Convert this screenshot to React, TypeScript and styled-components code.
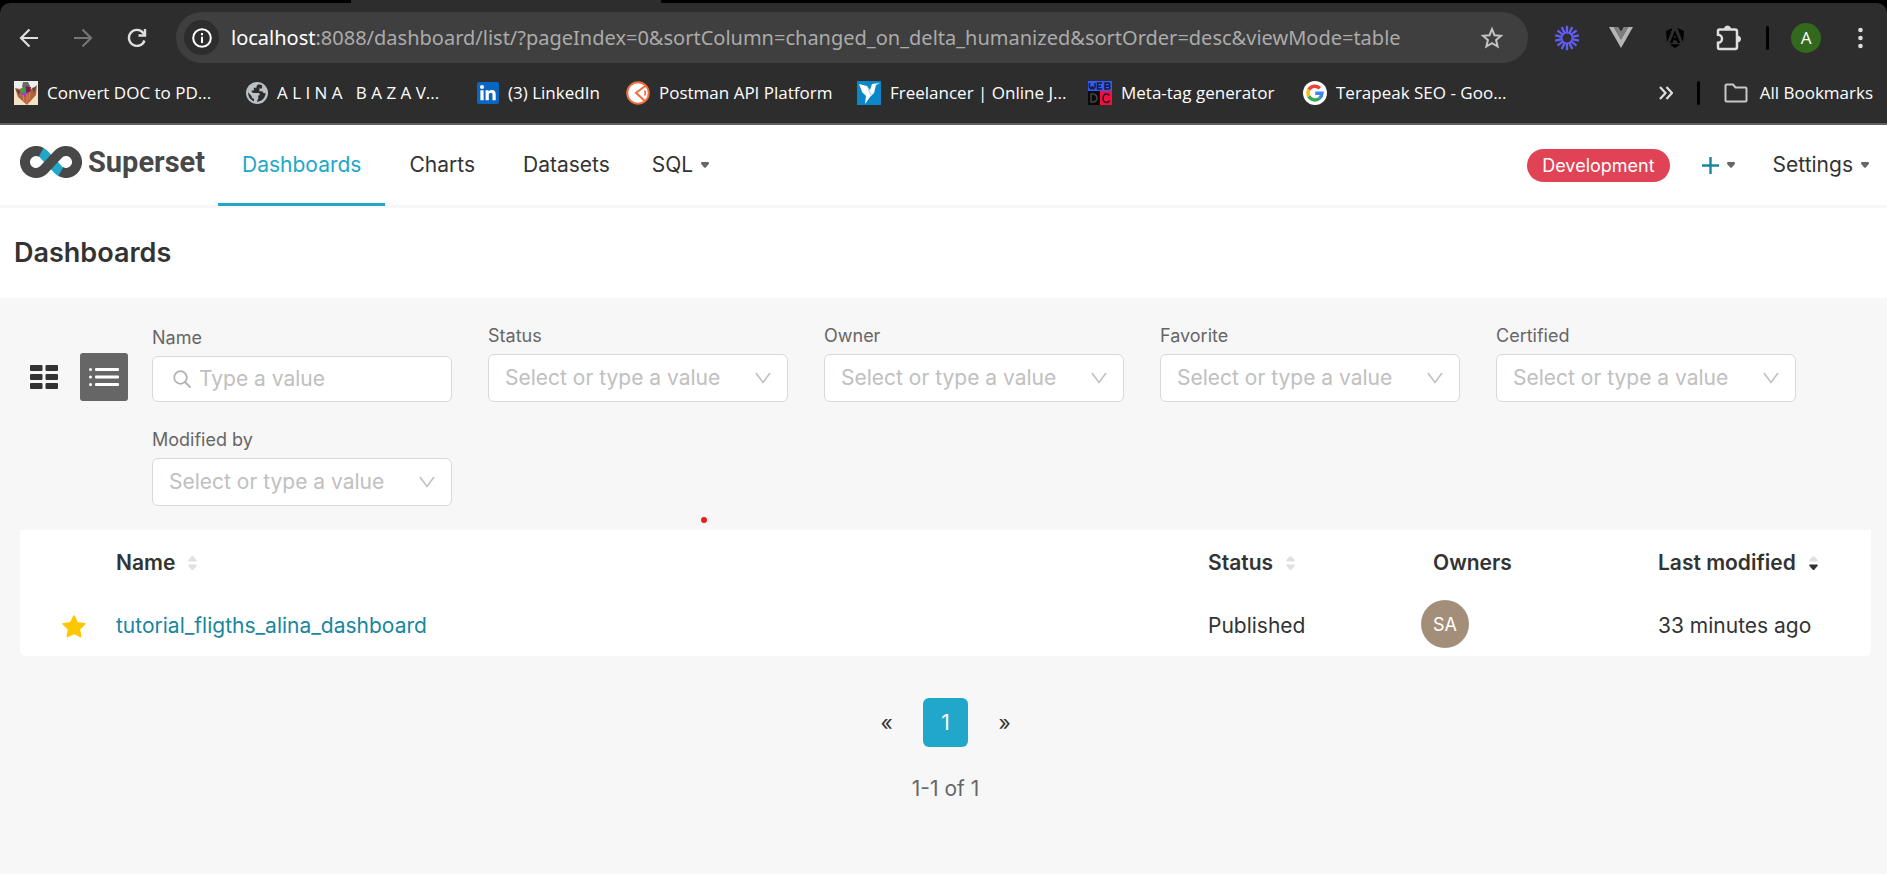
import React from 'react';
import styled, { createGlobalStyle } from 'styled-components';

const color = {
  primary: '#20a7c9',
  link: '#1985a0',
  text: '#333333',
  muted: '#666666',
  placeholder: '#c0c0c0',
  line: '#d9d9d9',
  canvas: '#f7f7f7',
  chrome: '#2d2d2d',
  chromeIcon: '#dedede',
};

const GlobalStyle = createGlobalStyle`
  *, *::before, *::after { box-sizing: border-box; }
  body {
    margin: 0;
    background: #ffffff;
    color: ${color.text};
    font-family: Inter, "Liberation Sans", sans-serif;
    font-size: 21px;
    line-height: 30px;
  }
  button, input, select { font: inherit; color: inherit; }
  button { padding: 0; border: 0; background: none; cursor: pointer; }
  a { color: inherit; text-decoration: none; }
  svg { display: block; flex: none; }
`;

const Window = styled.div`
  display: flex;
  flex-direction: column;
  min-height: 100vh;
`;

/* ---------- browser chrome ---------- */

const Chrome = styled.header`
  background: #000000;
  border-bottom: 2px solid #5f5f5f;
  font-family: "Open Sans", "Noto Sans", sans-serif;
`;

const TabStrip = styled.div`
  display: flex;
  height: 3px;
  padding-left: 351px;
`;

const ActiveTab = styled.div`
  width: 310px;
  background: ${color.chrome};
`;

const ChromePanel = styled.div`
  background: ${color.chrome};
  border-radius: 10px 10px 0 0;
  padding-bottom: 9px;
`;

const Toolbar = styled.div`
  display: flex;
  align-items: center;
  height: 69px;
  padding-left: 2px;
`;

const ToolButton = styled.button`
  display: flex;
  flex: none;
  align-items: center;
  justify-content: center;
  width: 54px;
  height: 48px;
`;

const AddressBar = styled.div`
  display: flex;
  flex: 1;
  align-items: center;
  min-width: 0;
  height: 51px;
  margin: 0 12px;
  padding: 0 24px 0 8px;
  border-radius: 26px;
  background: #3f3f3f;
`;

const SiteInfo = styled.button`
  display: flex;
  flex: none;
  align-items: center;
  justify-content: center;
  width: 35px;
  height: 35px;
  border-radius: 50%;
  background: ${color.chrome};
`;

const Address = styled.div`
  flex: 1;
  min-width: 0;
  margin: 0 12px;
  overflow: hidden;
  color: #ababab;
  font-family: "Noto Sans", sans-serif;
  font-size: 20px;
  white-space: nowrap;
`;

const Host = styled.span`
  color: #ffffff;
`;

const Divider = styled.span`
  flex: none;
  width: 3px;
  height: 24px;
  margin: 0 10px;
  border-radius: 2px;
  background: #000000;
`;

const ProfileBadge = styled.span`
  width: 30px;
  height: 30px;
  border-radius: 50%;
  background: #33691e;
  color: #ffffff;
  font-size: 17px;
  line-height: 30px;
  text-align: center;
`;

const BookmarksBar = styled.nav`
  display: flex;
  align-items: center;
  height: 42px;
  padding: 0 14px;
  color: #ffffff;
  font-size: 17px;
`;

const Bookmark = styled.a<{ $slot?: number }>`
  display: flex;
  flex: none;
  align-items: center;
  gap: 9px;
  width: ${(p) => (p.$slot ? `${p.$slot}px` : 'auto')};
  white-space: pre;
`;

const BookmarksEnd = styled.div`
  display: flex;
  align-items: center;
  gap: 14px;
  margin-left: auto;
`;

const AllBookmarks = styled.button`
  display: flex;
  align-items: center;
  gap: 12px;
`;

/* ---------- application navigation ---------- */

const NavBar = styled.nav`
  display: flex;
  align-items: center;
  height: 83px;
  padding: 0 18px 0 20px;
  border-bottom: 3px solid ${color.canvas};
`;

const Brand = styled.a`
  display: flex;
  align-items: center;
  gap: 6px;
  margin-right: 13px;
  padding-bottom: 6px;
  color: #484848;
  font-family: Roboto, sans-serif;
  font-size: 29px;
  font-weight: 700;
`;

const NavTab = styled.a<{ $active?: boolean }>`
  display: flex;
  align-items: center;
  height: 82px;
  padding: 0 24px;
  border: solid transparent;
  border-width: 3px 0;
  border-bottom-color: ${(p) => (p.$active ? color.primary : 'transparent')};
  color: ${(p) => (p.$active ? color.primary : color.text)};
`;

const NavMenu = styled.button`
  display: flex;
  align-items: center;
  gap: 8px;
  margin-left: 18px;
`;

const NavEnd = styled.div`
  display: flex;
  align-items: center;
  gap: 20px;
  margin-left: auto;
`;

const EnvTag = styled.span`
  height: 33px;
  margin-right: -6px;
  padding: 0 15px;
  border-radius: 17px;
  background: #e04355;
  color: #ffffff;
  font-size: 18px;
  line-height: 33px;
`;

const TitleBar = styled.div`
  display: flex;
  align-items: center;
  height: 90px;
  padding: 0 14px;
`;

const PageTitle = styled.h1`
  margin: 0;
  font-size: 27px;
  font-weight: 600;
`;

/* ---------- list view ---------- */

const ListView = styled.main`
  position: relative;
  flex: 1;
  padding: 26px 16px 26px 20px;
  background: ${color.canvas};
`;

const Controls = styled.div`
  display: flex;
  gap: 24px;
  margin-bottom: 24px;
`;

const ViewToggle = styled.div`
  display: flex;
  gap: 12px;
  margin-top: 29px;
`;

const ViewButton = styled.button<{ $selected?: boolean }>`
  display: flex;
  align-items: center;
  justify-content: center;
  width: 48px;
  height: 48px;
  border-radius: 3px;
  background: ${(p) => (p.$selected ? color.muted : 'transparent')};
`;

const Filters = styled.div`
  display: flex;
  flex: 1;
  flex-wrap: wrap;
  align-items: flex-end;
  gap: 26px 36px;
`;

const Filter = styled.div`
  display: flex;
  flex-direction: column;
  gap: 6px;
  width: 300px;
`;

const FilterLabel = styled.label`
  color: ${color.muted};
  font-size: 18px;
  line-height: 24px;
`;

const SearchBox = styled.div`
  display: flex;
  align-items: center;
  gap: 8px;
  height: 46px;
  padding: 0 16px 0 20px;
  border: 1px solid ${color.line};
  border-radius: 6px;
  background: #ffffff;
`;

const SearchInput = styled.input`
  flex: 1;
  min-width: 0;
  padding: 0;
  border: 0;
  outline: 0;
  background: none;
  &::placeholder { color: ${color.placeholder}; opacity: 1; }
`;

const SelectBox = styled.div`
  display: grid;
  align-items: center;
  > * { grid-area: 1 / 1; }
  > svg { justify-self: end; margin-right: 17px; pointer-events: none; }
`;

const Select = styled.select`
  width: 100%;
  height: 48px;
  padding: 0 48px 0 16px;
  border: 1px solid ${color.line};
  border-radius: 6px;
  appearance: none;
  background: #ffffff;
  color: ${color.placeholder};
`;

const Pointer = styled.span`
  position: absolute;
  top: 219px;
  left: 701px;
  width: 6px;
  height: 6px;
  border-radius: 50%;
  background: #ee1c1c;
`;

const Table = styled.table`
  width: 100%;
  border-collapse: separate;
  border-spacing: 0;
  border-radius: 0 0 6px 6px;
  table-layout: fixed;
  background: #ffffff;
`;

const HeadCell = styled.th<{ $width?: number }>`
  width: ${(p) => (p.$width ? `${p.$width}px` : 'auto')};
  height: 66px;
  padding: 0 18px;
  font-weight: 600;
  text-align: left;
`;

const SortButton = styled.button`
  display: flex;
  align-items: center;
  gap: 13px;
  font-weight: 600;
`;

const Cell = styled.td<{ $pad?: number }>`
  height: 60px;
  padding: 0 0 0 ${(p) => p.$pad ?? 18}px;
`;

const FavoriteButton = styled.button`
  display: block;
`;

const DashboardLink = styled.a`
  color: ${color.link};
`;

const Avatar = styled.span`
  display: block;
  width: 48px;
  height: 48px;
  margin-bottom: 4px;
  border-radius: 50%;
  background: #a38f79;
  color: #ffffff;
  font-size: 18px;
  line-height: 49px;
  text-align: center;
`;

const Pager = styled.nav`
  display: flex;
  justify-content: center;
  gap: 14px;
  margin-top: 42px;
`;

const PageButton = styled.button<{ $current?: boolean }>`
  width: 45px;
  height: 49px;
  border-radius: 6px;
  background: ${(p) => (p.$current ? color.primary : 'transparent')};
  color: ${(p) => (p.$current ? '#ffffff' : color.text)};
`;

const RowCount = styled.p`
  margin: 27px 0 0;
  color: ${color.muted};
  text-align: center;
`;

/* ---------- icons ---------- */

const BackIcon = () => (
  <svg width="20" height="20" viewBox="0 0 20 20" fill="none" stroke={color.chromeIcon} strokeWidth="2.2">
    <path d="M19 10H3M10.5 1.500L2 10l8.500 8.500" />
  </svg>
);

const ForwardIcon = () => (
  <svg width="20" height="20" viewBox="0 0 20 20" fill="none" stroke="#757575" strokeWidth="2.200">
    <path d="M1 10h16M9.500 1.500L18 10l-8.500 8.500" />
  </svg>
);

const ReloadIcon = () => (
  <svg width="20" height="20" viewBox="0 0 20 20" fill="none" stroke={color.chromeIcon} strokeWidth="2.400">
    <path d="M17.500 12.500A8 8 0 1 1 16.300 5L18 7" />
    <path d="M18 1v6.500h-6.500" />
  </svg>
);

const InfoIcon = () => (
  <svg width="20" height="20" viewBox="0 0 20 20">
    <circle cx="10" cy="10" r="8.800" fill="none" stroke="#ffffff" strokeWidth="2" />
    <path d="M9 8.800h2V15H9zM9 5h2v2.200H9z" fill="#ffffff" />
  </svg>
);

const BookmarkStarIcon = () => (
  <svg width="24" height="24" viewBox="0 0 24 24" fill="none" stroke="#c4c4c4" strokeWidth="2">
    <path d="M12 3.200l2.500 6 6.500.6-4.900 4.300 1.500 6.400L12 17.100l-5.600 3.400 1.500-6.400L3 9.800l6.500-.6z" />
  </svg>
);

const BurstIcon = () => (
  <svg width="26" height="26" viewBox="0 0 26 26" stroke="#625df5" strokeWidth="2.300">
    {Array.from({ length: 14 }, (_, i) => (
      <path key={i} d="M13 8V0.800" transform={`rotate(${(i * 360) / 14} 13 13)`} />
    ))}
    <circle cx="13" cy="13" r="5.300" fill="none" strokeWidth="1.500" />
  </svg>
);

const VueIcon = () => (
  <svg width="24" height="21" viewBox="0 0 24 21">
    <path d="M0 0h4.800L12 12.500 19.200 0H24L12 21z" fill="#b5b5b5" />
    <path d="M4.800 0h4.500L12 4.600 14.700 0h4.500L12 12.500z" fill="#7f7f7f" />
  </svg>
);

const AngularIcon = () => (
  <svg width="18" height="20" viewBox="0 0 18 20" fill="#000000">
    <path d="M6.500 0L0 3l1 11.500zM11.500 0L18 3l-1 11.500zM9 2.500L3.800 15h2.600l1-2.700h3.200l1 2.700h2.600zm0 4.200l1.200 3.300H7.800zM4.500 16.200h9V17L9 20l-4.500-3z" />
  </svg>
);

const PuzzleIcon = () => (
  <svg width="26" height="26" viewBox="0 0 26 26">
    <path
      d="M3.500 4.500h15.500q2 0 2 2V22q0 2-2 2H3.500q-1.500 0-1.500-1.500v-4.700a4 4 0 0 0 0-8V6q0-1.500 1.500-1.500z"
      fill="none"
      stroke={color.chromeIcon}
      strokeWidth="2.500"
    />
    <path d="M8.500 4a3 3 0 0 1 6 0zM21.500 11a3 3 0 0 1 0 6z" fill={color.chromeIcon} stroke={color.chromeIcon} />
  </svg>
);

const MoreIcon = () => (
  <svg width="5" height="22" viewBox="0 0 5 22" fill={color.chromeIcon}>
    <circle cx="2.500" cy="3" r="2.300" />
    <circle cx="2.500" cy="11" r="2.300" />
    <circle cx="2.500" cy="19" r="2.300" />
  </svg>
);

const ConverterIcon = () => (
  <svg width="24" height="24" viewBox="0 0 24 24">
    <path d="M0 0h24v24H0z" fill="#f3e3c4" />
    <path d="M0 0h24v8H0z" fill="#eeeeee" />
    <path d="M1 7l5 1 6-3 6 3 5-4-1 10-9 10L4 16z" fill="#b5603f" />
    <path d="M9 1h5l2 4-4 4-4-3z" fill="#6a6a6a" />
    <path d="M6 8l5-2 1 6-4 1z" fill="#3aa63a" />
    <path d="M12 5l5 1-1 5-4 1z" fill="#7c1f4f" />
    <path d="M7 12l6-1-1 6z" fill="#8a45e0" />
    <path d="M18 7l4-1-2 6zM2 8l4 2-1 4z" fill="#4a4a4a" />
    <path d="M9 14l1 7M13 13v9M16 11l-1 8" stroke="#d9874f" />
  </svg>
);

const GlobeIcon = () => (
  <svg width="22" height="22" viewBox="1 1 22 22">
    <circle cx="12" cy="12" r="11" fill="#bcc0c5" />
    <path
      d="M14 3.200c-2 .5-2.800 1.800-2.500 3.600H8.800v2.700H6.500c-.2 1.500.8 2.400 2.300 2.400h4.700c1.600 0 1.700 2.600-.2 2.700v2.700c0 1.300-1.300 1.500-1.300 3.400 4.500-.2 8.600-4 8.600-8.800-1.600.8-3-.2-3.200-1.600h-3V7.500h2.700V4.200zM3.200 11.200c-.4 4.500 2.300 8 5.800 9.200v-2.700c-1.500 0-2.400-1-2.400-2.500z"
      fill={color.chrome}
    />
  </svg>
);

const LinkedInIcon = () => (
  <svg width="22" height="22" viewBox="0 0 22 22">
    <rect width="22" height="22" rx="2" fill="#0a66c2" />
    <circle cx="5" cy="5" r="2" fill="#ffffff" />
    <path
      d="M3.400 8.300h3.200v10H3.400zM8.600 8.300h3v1.400c.6-1 1.700-1.700 3.200-1.700 3 0 3.900 1.900 3.900 4.700v5.600h-3.200v-5c0-1.400-.3-2.500-1.700-2.500-1.500 0-2 1.100-2 2.500v5H8.600z"
      fill="#ffffff"
    />
  </svg>
);

const PostmanIcon = () => (
  <svg width="24" height="24" viewBox="0 0 24 24" fill="none" stroke="#f26b3a">
    <circle cx="12" cy="12" r="10.800" fill="#ffffff" strokeWidth="2" />
    <path d="M20 4.500l-10 7.300 8.500 8" strokeWidth="2" />
    <path d="M18.500 9.500q2 2.500 0 5" strokeWidth="1.500" />
  </svg>
);

const FreelancerIcon = () => (
  <svg width="24" height="24" viewBox="0 0 24 24">
    <path d="M0 0h24v24H0z" fill="#0a87c9" />
    <path d="M2 3l8 2 3 4 2-6 8-1-4 2-2 8-4 4-5 7 1-8-4-4-1-3z" fill="#ffffff" />
    <path d="M10 5l4 9" stroke="#9bd1ec" />
  </svg>
);

const WebDcIcon = () => (
  <svg width="24" height="24" viewBox="0 0 24 24">
    <path d="M0 0h24v10H0z" fill="#2f5df5" />
    <path d="M0 10h12v14H0z" fill="#0a0a0a" />
    <path d="M12 10h12v14H12z" fill="#fa0f3c" />
    <g fill="none" stroke="#1a1a2e" strokeWidth="1.500">
      <path d="M1.500 2v4l1.500 2 1.300-2 1.300 2L7 6V2M14 2H9.500v6H14M9.500 5H13M17 2v6h4q2-1.500 0-3 1.500-1.500 0-3zM17 5h4" />
      <path d="M21.500 14.500q-1-2-4-1.500-2.500 1-2.500 4.500t3 4q3 0 3.500-2" />
      <path d="M3 13v8h3q3-1 3-4t-3-4z" stroke="#444444" />
    </g>
  </svg>
);

const GoogleIcon = () => (
  <svg width="24" height="24" viewBox="0 0 24 24" fill="none" strokeWidth="3.400">
    <circle cx="12" cy="12" r="12" fill="#ffffff" />
    <path d="M16.900 7.300A7 7 0 0 0 5.900 8.600" stroke="#ea4335" />
    <path d="M5.900 8.600a7 7 0 0 0 0 6.800" stroke="#fbbc05" />
    <path d="M5.900 15.400a7 7 0 0 0 10.600 1.900" stroke="#34a853" />
    <path d="M16.500 17.300A7 7 0 0 0 19 12.200h-6.800" stroke="#4285f4" />
  </svg>
);

const MoreBookmarksIcon = () => (
  <svg width="14" height="14" viewBox="0 0 14 14" fill="none" stroke={color.chromeIcon} strokeWidth="2.200">
    <path d="M1 1l5.500 6L1 13M7.500 1L13 7l-5.500 6" />
  </svg>
);

const FolderIcon = () => (
  <svg width="24" height="20" viewBox="0 0 24 20" fill="none" stroke="#c8c8c8" strokeWidth="2">
    <path d="M2.500 1.500H9l2.500 3h10q1 0 1 1v12q0 1-1 1h-19q-1 0-1-1v-15q0-1 1-1z" />
  </svg>
);

const SupersetMark = () => (
  <svg width="62" height="32" viewBox="0 0 62 32" fill="none" stroke="#484848" strokeWidth="10">
    <path d="M20.600 6A11 11 0 0 1 24 8.500L38 23.500A11 11 0 0 0 41.400 26" stroke={color.primary} />
    <path d="M21.200 6.300A11 11 0 1 0 24 23.500L38 8.500A11 11 0 1 1 40.800 25.700" />
  </svg>
);

const Caret = () => (
  <svg width="8" height="6" viewBox="0 0 8 6" fill={color.muted}>
    <path d="M1 0h6q1 0 1 1 0 1-.8 1.700L5 5.200q-1 1-2 0L.8 2.700Q0 2 0 1q0-1 1-1z" />
  </svg>
);

const PlusIcon = () => (
  <svg width="17" height="17" viewBox="0 0 17 17" stroke={color.link} strokeWidth="2.400">
    <path d="M8.500 0v17M0 8.500h17" />
  </svg>
);

const CardsIcon = () => (
  <svg width="28" height="24" viewBox="0 0 28 24" fill={color.text}>
    {[0, 9, 18].map((y) => (
      <g key={y}>
        <rect y={y} width="12.500" height="6" rx="1" />
        <rect x="15.500" y={y} width="12.500" height="6" rx="1" />
      </g>
    ))}
  </svg>
);

const ListIcon = () => (
  <svg width="30" height="18" viewBox="0 0 30 18" fill="#ffffff">
    {[1.5, 9, 16.5].map((y) => (
      <g key={y}>
        <circle cx="1.500" cy={y} r="1.500" />
        <rect x="6" y={y - 1.5} width="24" height="3" rx="1" />
      </g>
    ))}
  </svg>
);

const SearchIcon = () => (
  <svg width="18" height="18" viewBox="0 0 18 18" fill="none" stroke="#b2b2b2" strokeWidth="1.800">
    <circle cx="7.500" cy="7.500" r="6.300" />
    <path d="M12 12l5 5" strokeLinecap="round" />
  </svg>
);

const ChevronIcon = () => (
  <svg width="16" height="12" viewBox="0 0 16 12" fill="none" stroke="#bfbfbf" strokeWidth="1.600">
    <path d="M1 1l7 9.500L15 1" />
  </svg>
);

const SortIcon = ({ descending }: { descending?: boolean }) => (
  <svg width="9" height="14" viewBox="0 0 9 14" fill="#e0e0e0">
    <path d="M1 5.500Q0 5.500.3 4.200L3.500.6q1-1 2 0l3.200 3.600q.3 1.300-.7 1.300z" />
    <path
      d="M1 8.500q-1 0-.7 1.300l3.200 3.600q1 1 2 0l3.200-3.600Q9 8.500 8 8.500z"
      fill={descending ? color.text : '#e0e0e0'}
    />
  </svg>
);

const FavoriteIcon = () => (
  <svg width="24" height="23" viewBox="0 0 24 23">
    <path
      d="M12 1.200l3.200 6.600 7.500 1-5.400 5.200 1.200 7.500L12 18.200 5.500 21.500 6.700 14 1.300 8.800l7.500-1z"
      fill="#fcc700"
      stroke="#fcc700"
      strokeWidth="1.800"
      strokeLinejoin="round"
    />
  </svg>
);

/* ---------- content ---------- */

const bookmarks = [
  { label: 'Convert DOC to PD...', slot: 232, icon: <ConverterIcon /> },
  { label: 'A L I N A   B A Z A V...', slot: 231, icon: <GlobeIcon /> },
  { label: '(3) LinkedIn', slot: 149, icon: <LinkedInIcon /> },
  { label: 'Postman API Platform', slot: 231, icon: <PostmanIcon /> },
  { label: 'Freelancer | Online J...', slot: 231, icon: <FreelancerIcon /> },
  { label: 'Meta-tag generator', slot: 215, icon: <WebDcIcon /> },
  { label: 'Terapeak SEO - Goo...', icon: <GoogleIcon /> },
];

const selectFilters = ['Status', 'Owner', 'Favorite', 'Certified', 'Modified by'];

const dashboards = [
  { name: 'tutorial_fligths_alina_dashboard', status: 'Published', owner: 'SA', modified: '33 minutes ago' },
];

const Browser = () => (
  <Chrome>
    <TabStrip>
      <ActiveTab />
    </TabStrip>
    <ChromePanel>
      <Toolbar>
        <ToolButton aria-label="Back"><BackIcon /></ToolButton>
        <ToolButton aria-label="Forward"><ForwardIcon /></ToolButton>
        <ToolButton aria-label="Reload"><ReloadIcon /></ToolButton>
        <AddressBar>
          <SiteInfo aria-label="Site information"><InfoIcon /></SiteInfo>
          <Address role="textbox" aria-label="Address" tabIndex={0}>
            <Host>localhost</Host>
            :8088/dashboard/list/?pageIndex=0&amp;sortColumn=changed_on_delta_humanized&amp;sortOrder=desc&amp;viewMode=table
          </Address>
          <button aria-label="Bookmark this page"><BookmarkStarIcon /></button>
        </AddressBar>
        <ToolButton aria-label="Loom"><BurstIcon /></ToolButton>
        <ToolButton aria-label="Vue devtools"><VueIcon /></ToolButton>
        <ToolButton aria-label="Angular devtools"><AngularIcon /></ToolButton>
        <ToolButton aria-label="Extensions"><PuzzleIcon /></ToolButton>
        <Divider />
        <ToolButton aria-label="Profile"><ProfileBadge>A</ProfileBadge></ToolButton>
        <ToolButton aria-label="Menu"><MoreIcon /></ToolButton>
      </Toolbar>
      <BookmarksBar aria-label="Bookmarks">
        {bookmarks.map((b) => (
          <Bookmark key={b.label} href="#" $slot={b.slot}>
            {b.icon}
            {b.label}
          </Bookmark>
        ))}
        <BookmarksEnd>
          <button aria-label="More bookmarks"><MoreBookmarksIcon /></button>
          <Divider />
          <AllBookmarks>
            <FolderIcon />
            All Bookmarks
          </AllBookmarks>
        </BookmarksEnd>
      </BookmarksBar>
    </ChromePanel>
  </Chrome>
);

const Navigation = () => (
  <NavBar>
    <Brand href="#">
      <SupersetMark />
      Superset
    </Brand>
    <NavTab href="#" $active>Dashboards</NavTab>
    <NavTab href="#">Charts</NavTab>
    <NavTab href="#">Datasets</NavTab>
    <NavMenu>SQL<Caret /></NavMenu>
    <NavEnd>
      <EnvTag>Development</EnvTag>
      <NavMenu aria-label="Create"><PlusIcon /><Caret /></NavMenu>
      <NavMenu>Settings<Caret /></NavMenu>
    </NavEnd>
  </NavBar>
);

const FilterBar = () => (
  <Controls>
    <ViewToggle>
      <ViewButton aria-label="Card view"><CardsIcon /></ViewButton>
      <ViewButton aria-label="List view" $selected><ListIcon /></ViewButton>
    </ViewToggle>
    <Filters>
      <Filter>
        <FilterLabel htmlFor="filter-name">Name</FilterLabel>
        <SearchBox>
          <SearchIcon />
          <SearchInput id="filter-name" type="text" placeholder="Type a value" />
        </SearchBox>
      </Filter>
      {selectFilters.map((label) => (
        <Filter key={label}>
          <FilterLabel htmlFor={`filter-${label}`}>{label}</FilterLabel>
          <SelectBox>
            <Select id={`filter-${label}`}>
              <option>Select or type a value</option>
            </Select>
            <ChevronIcon />
          </SelectBox>
        </Filter>
      ))}
    </Filters>
  </Controls>
);

const DashboardTable = () => (
  <Table>
    <thead>
      <tr>
        <HeadCell $width={78} aria-label="Favorite" />
        <HeadCell><SortButton>Name<SortIcon /></SortButton></HeadCell>
        <HeadCell $width={225}><SortButton>Status<SortIcon /></SortButton></HeadCell>
        <HeadCell $width={225}>Owners</HeadCell>
        <HeadCell $width={231}><SortButton>Last modified<SortIcon descending /></SortButton></HeadCell>
      </tr>
    </thead>
    <tbody>
      {dashboards.map((d) => (
        <tr key={d.name}>
          <Cell $pad={42}><FavoriteButton aria-label="Unfavorite"><FavoriteIcon /></FavoriteButton></Cell>
          <Cell><DashboardLink href="#">{d.name}</DashboardLink></Cell>
          <Cell>{d.status}</Cell>
          <Cell $pad={6}><Avatar>{d.owner}</Avatar></Cell>
          <Cell>{d.modified}</Cell>
        </tr>
      ))}
    </tbody>
  </Table>
);

export default function App() {
  return (
    <Window>
      <GlobalStyle />
      <Browser />
      <Navigation />
      <TitleBar>
        <PageTitle>Dashboards</PageTitle>
      </TitleBar>
      <ListView>
        <FilterBar />
        <DashboardTable />
        <Pager aria-label="Pagination">
          <PageButton aria-label="Previous page">«</PageButton>
          <PageButton $current>1</PageButton>
          <PageButton aria-label="Next page">»</PageButton>
        </Pager>
        <RowCount>1-1 of 1</RowCount>
        <Pointer />
      </ListView>
    </Window>
  );
}
